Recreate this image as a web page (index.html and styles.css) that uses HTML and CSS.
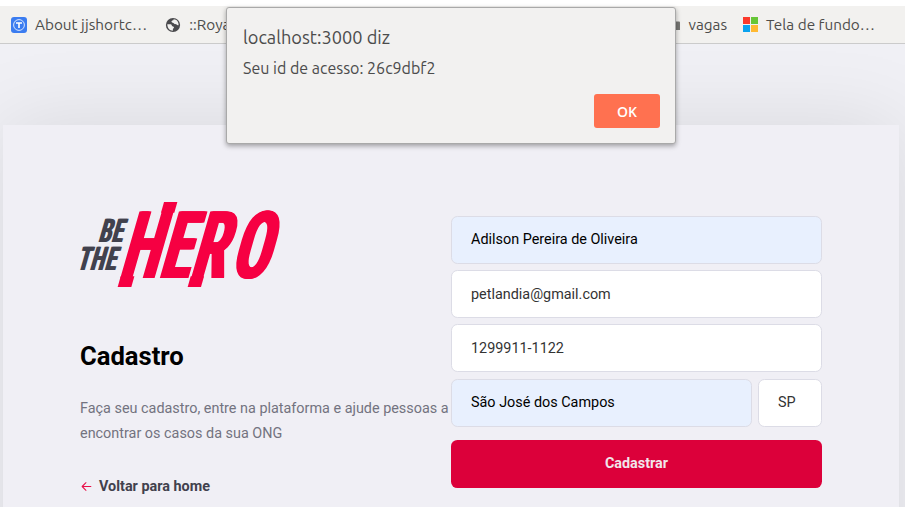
FILE: index.html
```html
<!DOCTYPE html>
<html lang="pt-BR">
<head>
<meta charset="utf-8">
<title>Be The Hero</title>
<link rel="stylesheet" href="styles.css">
</head>
<body>
<nav class="bookmarks">
  <div class="bookmark first">
    <svg width="16" height="16" viewBox="0 0 16 16"><rect width="16" height="16" rx="3" fill="#3b7cf0"/><circle cx="8" cy="8" r="5.4" fill="none" stroke="#d9e7ff" stroke-width="1"/><path d="M5 6h6M8 6v5" stroke="#fff" stroke-width="1.6"/></svg>
    <span class="label">About jjshortc…</span>
  </div>
  <div class="bookmark second">
    <svg width="16" height="16" viewBox="0 0 16 16"><circle cx="8" cy="8" r="7.1" fill="#4a4a4d"/><path d="M2.3 7.2h3.2c1.600 0 .8 2.200 2.400 2.200 1.300 0 1.400 1.200.6 1.800-.8.5-.6 1.300-.6 2.500-3.200 0-5.600-2.800-5.600-6.500zM8.700 2.300c-.2 1.700-2.400 1-2.200 2.500.1 1.200 2 .6 2.500 1.700.5 1.200 1.800.5 2.600 1 .7.400.8 1 2 .8C13.800 5 11.800 2.500 8.700 2.300z" fill="#f2f1ef"/></svg>
    <span class="label">::Roya</span>
  </div>
  <div class="bookmark folder">
    <svg width="16" height="16" viewBox="0 0 16 16"><path d="M1 3h5l1.500 1.500H15a1 1 0 0 1 1 1V13H1z" fill="#777774"/></svg>
    <span class="label">vagas</span>
  </div>
  <div class="bookmark last">
    <svg width="15" height="15" viewBox="0 0 15 15"><path fill="#fb3a2b" d="M0 0h7v7H0z"/><path fill="#67c637" d="M8 0h7v7H8z"/><path fill="#0aa2ee" d="M0 8h7v7H0z"/><path fill="#ffb932" d="M8 8h7v7H8z"/></svg>
    <span class="label">Tela de fundo…</span>
  </div>
</nav>
<main class="page">
  <div class="card">
    <section class="intro">
      <svg class="logo" width="200" height="85" viewBox="30 36 600 255">
        <g fill="#f60042" transform="translate(0 263) skewX(-16)">
          <g transform="scale(.67 1)">
            <text id="hero" class="hero" x="209 386 526 707" y="0">HERO</text>
            <use href="#hero" x="5"/><use href="#hero" x="10"/><use href="#hero" x="14"/>
          </g>
          <rect x="151" y="-4" width="41" height="32"/>
          <rect x="217" y="-227" width="40" height="32"/>
          <rect x="361" y="-4" width="40" height="32"/>
        </g>
        <g fill="#41414d" transform="translate(0 156) skewX(-16)">
          <g transform="scale(.69 1)">
            <text id="be" class="small" x="119 175" y="0">BE</text>
            <use href="#be" x="5"/>
          </g>
        </g>
        <g fill="#41414d" transform="translate(0 241) skewX(-16)">
          <g transform="scale(.69 1)">
            <text id="the" class="small" x="25 82 146" y="0">THE</text>
            <use href="#the" x="5"/>
          </g>
        </g>
      </svg>
      <h1>Cadastro</h1>
      <p>Faça seu cadastro, entre na plataforma e ajude pessoas a encontrar os casos da sua ONG</p>
      <a class="back"><svg width="13" height="13" viewBox="0 0 24 24" fill="none" stroke="#e8104a" stroke-width="2" stroke-linecap="round" stroke-linejoin="round"><path d="M20 12H4M11 19l-7-7 7-7"/></svg><span>Voltar para home</span></a>
    </section>
    <form class="form">
      <div class="field filled">Adilson Pereira de Oliveira</div>
      <div class="field low">petlandia@gmail.com</div>
      <div class="field low">1299911-1122</div>
      <div class="row">
        <div class="field filled city">São José dos Campos</div>
        <div class="field uf">SP</div>
      </div>
      <button class="submit" type="button">Cadastrar</button>
    </form>
  </div>
</main>
<div class="dialog">
  <div class="dialog-title"><span>localhost:3000 diz</span></div>
  <div class="dialog-text"><span>Seu id de acesso: 26c9dbf2</span></div>
  <button class="ok" type="button">OK</button>
</div>
</body>
</html>
```
FILE: styles.css
```css
* { box-sizing: border-box; margin: 0; padding: 0; }
body { height: 507px; overflow: hidden; position: relative; display: flex; flex-direction: column; background: #f0f0f5; font: 14.4px Roboto, sans-serif; }
.bookmarks { flex: none; height: 44px; border-top: 6px solid #fff; border-bottom: 1px solid #cbcbcb; background: #f2f1ef; display: flex; align-items: center; padding: 0 30px 0 11px; position: relative; z-index: 1; font: 15.3px Ubuntu, "Noto Sans", sans-serif; color: #4d4d4b; }
.bookmark { display: flex; align-items: center; gap: 8px; white-space: nowrap; }
.second { margin-left: 18px; }
.folder { margin-left: auto; }
.last { margin-left: 16px; gap: 8px; }
.page { flex: 1; min-height: 0; padding: 81px 6px 0 3px; overflow: hidden; }
.card { height: 560px; background: #f0eff5; box-shadow: 0 0 80px rgba(0,0,0,.1); padding: 77px 77px 0; display: flex; justify-content: space-between; }
.intro { width: 371px; flex: none; }
.logo { display: block; overflow: visible; }
.hero { font: 700 281px "Roboto Condensed", Roboto, sans-serif; }
.small { font: 700 98px "Roboto Condensed", Roboto, sans-serif; }
h1 { margin-top: 51px; font-size: 25.6px; line-height: 36px; font-weight: 700; color: #000; }
p { margin-top: 22px; line-height: 25px; color: #737380; }
.back { display: flex; align-items: center; margin-top: 28px; height: 25px; font-weight: 700; color: #41414d; gap: 6px; }
.form { width: 371px; flex: none; margin-top: 14px; }
.field { height: 48px; margin-bottom: 6.2px; border: 1px solid #dcdce6; border-radius: 6.4px; padding: 0 19px; background: #fff; color: #333; line-height: 45px; white-space: nowrap; }
.low { line-height: 47px; }
.filled { background: #e8f0fe; color: #000; }
.row { display: flex; gap: 6px; }
.city { flex: 1; }
.uf { width: 64px; }
.submit { display: block; width: 100%; height: 48px; margin-top: 7px; border: 0; border-radius: 6.4px; background: #dc003a; color: #f1e6ea; font: 700 14.4px/46px Roboto, sans-serif; }
.dialog { position: absolute; z-index: 2; left: 226px; top: 7px; width: 450px; height: 137px; border: 1px solid #a9a9a9; border-radius: 3px; background: #f2f1f0; box-shadow: 0 2px 5px rgba(0,0,0,.35); padding: 17px 15px 0 16px; display: flex; flex-direction: column; font-family: Ubuntu, "Noto Sans", sans-serif; color: #4c4c4c; }
.dialog-title { font-size: 18.2px; line-height: 24px; }
.dialog-text { margin-top: 7px; font-size: 16px; line-height: 24px; }
.ok { align-self: flex-end; margin-top: 14px; width: 66px; height: 34px; border: 0; border-radius: 3px; background: #ff7150; color: #fff; font: 600 14px "Open Sans", sans-serif; }
```
